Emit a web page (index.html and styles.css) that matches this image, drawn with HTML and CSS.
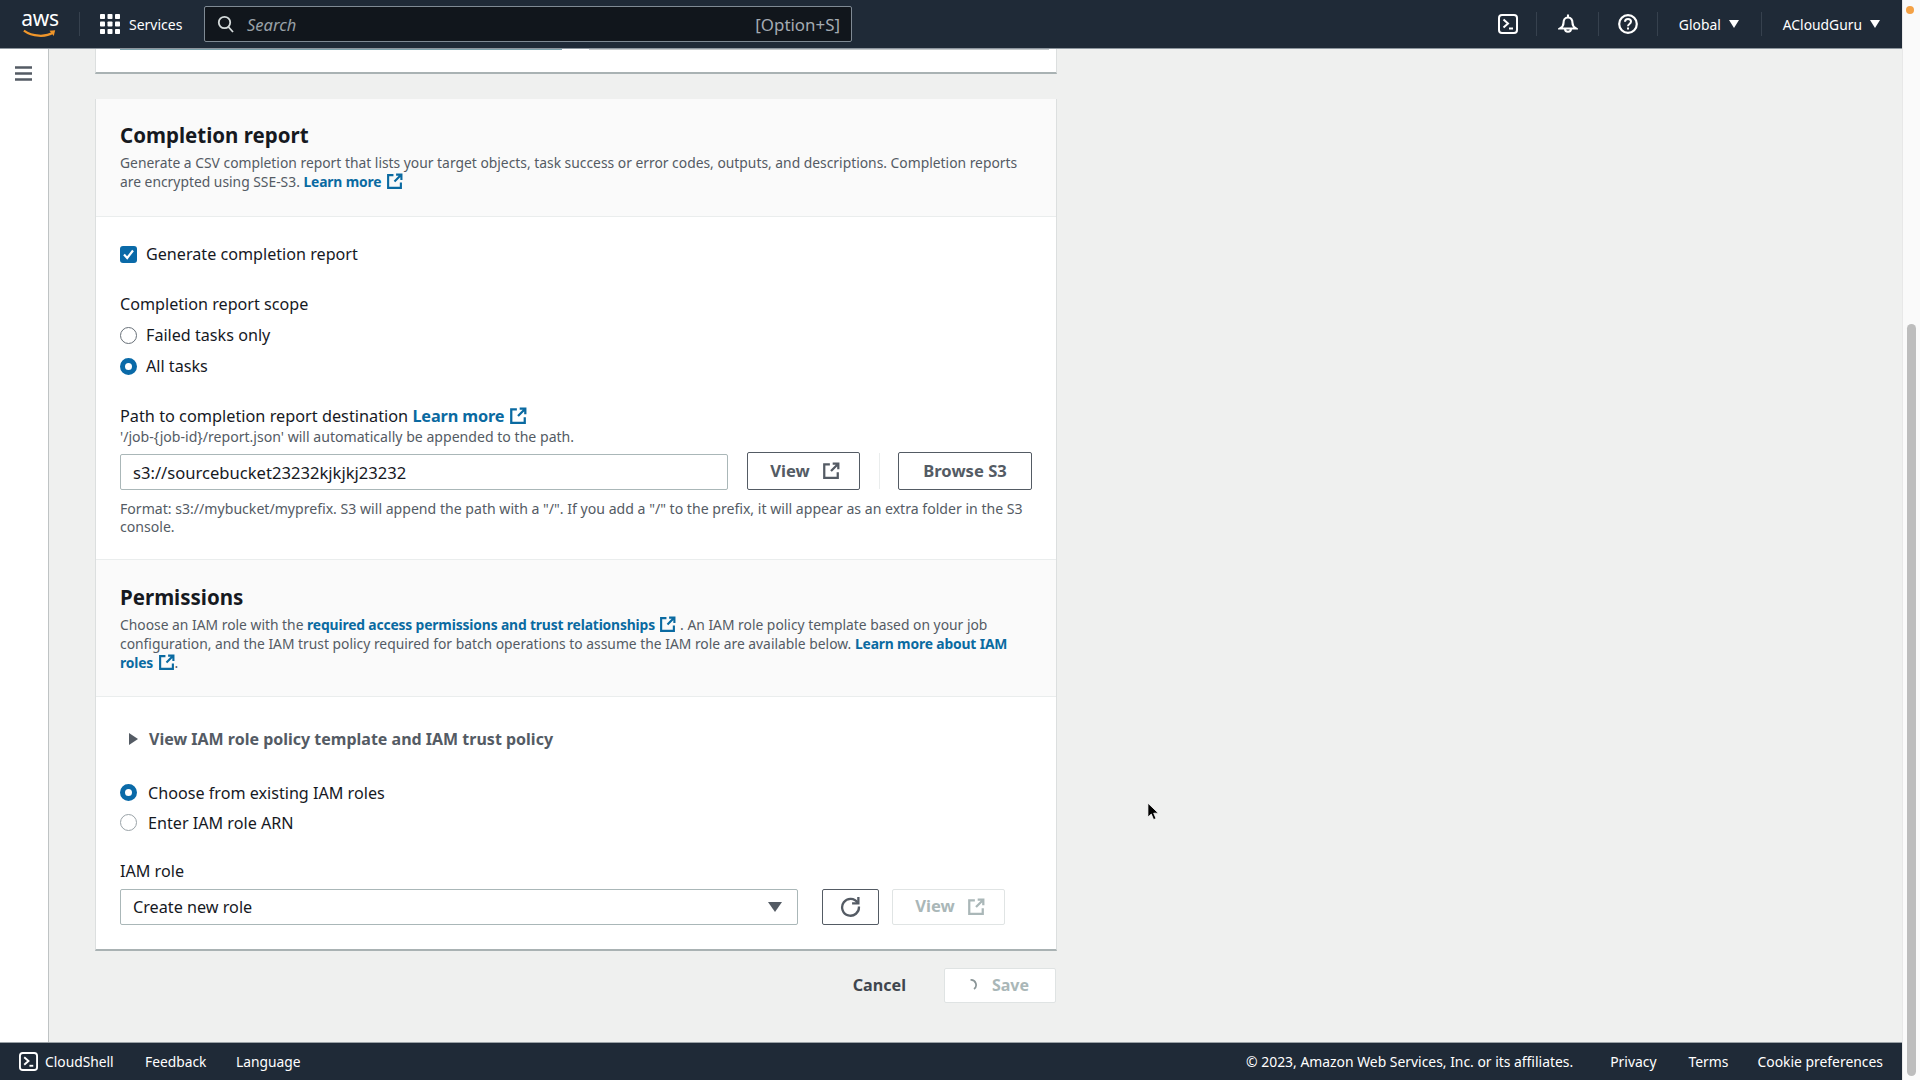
FILE: index.html
```html
<!DOCTYPE html>
<html lang="en">
<head>
<meta charset="utf-8">
<title>Batch Operations - Completion report</title>
<link rel="stylesheet" href="styles.css">
</head>
<body>
<svg class="defs" width="0" height="0" aria-hidden="true">
  <symbol id="ext" viewBox="0 0 16 16"><path d="M7 2H2v12h12V9M9.500 1.500h5v5M14.500 1.500L8 8" fill="none" stroke="currentColor" stroke-width="2"/></symbol>
  <symbol id="shell" viewBox="0 0 20 20"><rect x="1" y="1" width="18" height="18" rx="3" fill="none" stroke="currentColor" stroke-width="2"/><path d="M5.500 5.500L10 9.500 5.500 13.500" fill="none" stroke="currentColor" stroke-width="2"/><path d="M11 14.500h4" stroke="currentColor" stroke-width="2"/></symbol>
</svg>
<div class="shell">
  <div class="app">
    <header class="topbar">
      <div class="logo">
        <span class="logo-text">aws</span>
        <svg class="smile" viewBox="0 0 38 10"><path d="M2 1.500C11 8 25 8.500 33 3.500" fill="none" stroke="#f0962a" stroke-width="2.400"/><path d="M29 1.500l6-.5-1.500 6z" fill="#f0962a"/></svg>
      </div>
      <span class="top-div logo-div"></span>
      <svg class="grid-icon" viewBox="0 0 20 20" fill="#fff"><rect x="0" y="0" width="5" height="5" rx=".8"/><rect x="7.500" y="0" width="5" height="5" rx=".8"/><rect x="15" y="0" width="5" height="5" rx=".8"/><rect x="0" y="7.500" width="5" height="5" rx=".8"/><rect x="7.500" y="7.500" width="5" height="5" rx=".8"/><rect x="15" y="7.500" width="5" height="5" rx=".8"/><rect x="0" y="15" width="5" height="5" rx=".8"/><rect x="7.500" y="15" width="5" height="5" rx=".8"/><rect x="15" y="15" width="5" height="5" rx=".8"/></svg>
      <span class="services">Services</span>
      <div class="search">
        <svg class="search-icon" viewBox="0 0 18 18"><circle cx="7.500" cy="7.500" r="5.700" fill="none" stroke="currentColor" stroke-width="1.800"/><path d="M11.500 12l4.500 5" stroke="currentColor" stroke-width="1.800" fill="none"/></svg>
        <span class="search-text">Search</span>
        <span class="search-key">[Option+S]</span>
      </div>
      <div class="top-right">
        <svg class="top-icon" viewBox="0 0 20 20"><use href="#shell"/></svg>
        <span class="top-div d1"></span>
        <svg class="top-icon bell" viewBox="0 0 20 20"><path d="M10 .5v3M10 3.500c-3.200 0-4.500 2.500-4.500 5.500 0 2.500-1 4-3.500 5.500h16c-2.500-1.500-3.500-3-3.500-5.500 0-3-1.300-5.500-4.500-5.500zM7 14.700a3 3 0 0 0 6 0" fill="none" stroke="#fff" stroke-width="2.100"/></svg>
        <span class="top-div d2"></span>
        <svg class="top-icon help" viewBox="0 0 20 20"><circle cx="10" cy="10" r="8.800" fill="none" stroke="#fff" stroke-width="2.200"/><path d="M7 7.800c0-1.800 1.300-2.800 3-2.800s3 1 3 2.600c0 2.400-3 2.300-3 4.600" fill="none" stroke="#fff" stroke-width="2"/><rect x="9" y="13.500" width="2" height="2" fill="#fff"/></svg>
        <span class="top-div d3"></span>
        <span class="menu-label">Global</span><span class="caret-w"></span>
        <span class="top-div d4"></span>
        <span class="menu-label">ACloudGuru</span><span class="caret-w"></span>
      </div>
    </header>

    <div class="middle">
      <aside class="sidebar">
        <svg class="burger" viewBox="0 0 17 15"><path d="M0 1.500h17M0 7.500h17M0 13.500h17" stroke="#545b64" stroke-width="2.400"/></svg>
      </aside>
      <main class="content">
        <section class="card card-clipped">
          <div class="peek"><span class="peek-a"></span><span class="peek-b"></span></div>
        </section>

        <section class="card">
          <div class="card-head">
            <h2 class="title">Completion report</h2>
            <p class="desc">Generate a CSV completion report that lists your target objects, task success or error codes, outputs, and descriptions. Completion reports are encrypted using SSE-S3. <a class="link">Learn more <svg class="ext"><use href="#ext"/></svg></a></p>
          </div>
          <div class="body body-report">
            <label class="choice"><span class="checkbox"><svg viewBox="0 0 17 17"><path d="M4 8.500l3.200 3.500L13 4.500" fill="none" stroke="#fff" stroke-width="2.200"/></svg></span>Generate completion report</label>
            <div class="field-label scope-label">Completion report scope</div>
            <label class="choice c-failed"><span class="radio"></span>Failed tasks only</label>
            <label class="choice c-all"><span class="radio on"></span>All tasks</label>
            <div class="field-label path-label">Path to completion report destination <a class="link">Learn more <svg class="ext ext-l"><use href="#ext"/></svg></a></div>
            <div class="hint hint-top">'/job-{job-id}/report.json' will automatically be appended to the path.</div>
            <div class="input-row">
              <div class="input path-input">s3://sourcebucket23232kjkjkj23232</div>
              <button class="btn btn-view">View <svg class="ext ext-l"><use href="#ext"/></svg></button>
              <span class="btn-div"></span>
              <button class="btn btn-browse">Browse S3</button>
            </div>
            <div class="hint hint-format">Format: s3://mybucket/myprefix. S3 will append the path with a "/". If you add a "/" to the prefix, it will appear as an extra folder in the S3 console.</div>
          </div>

          <div class="card-head perm-head">
            <h2 class="title">Permissions</h2>
            <p class="desc">Choose an IAM role with the <a class="link">required access permissions and trust relationships <svg class="ext"><use href="#ext"/></svg></a> . An IAM role policy template based on your job configuration, and the IAM trust policy required for batch operations to assume the IAM role are available below. <a class="link">Learn more about IAM roles <svg class="ext"><use href="#ext"/></svg></a>.</p>
          </div>
          <div class="body body-perm">
            <div class="expand"><span class="tri"></span>View IAM role policy template and IAM trust policy</div>
            <label class="choice c-choose wide"><span class="radio on"></span>Choose from existing IAM roles</label>
            <label class="choice c-enter wide"><span class="radio light"></span>Enter IAM role ARN</label>
            <div class="field-label role-label">IAM role</div>
            <div class="input-row role-row">
              <div class="input select">Create new role<span class="caret-d"></span></div>
              <button class="btn btn-refresh" aria-label="Refresh"><svg viewBox="0 0 20 20"><path d="M16.800 6.500A8 8 0 1 0 18 10" fill="none" stroke="#545b64" stroke-width="2.200"/><path d="M17.500 1v6H11.500" fill="none" stroke="#545b64" stroke-width="2.200"/></svg></button>
              <button class="btn btn-off">View <svg class="ext ext-l"><use href="#ext"/></svg></button>
            </div>
          </div>
        </section>

        <div class="actions">
          <span class="cancel">Cancel</span>
          <button class="btn-save"><svg viewBox="0 0 12 12"><path d="M3.500 1a5 5 0 0 1 3.500 9" fill="none" stroke="#8a9597" stroke-width="1.700"/></svg>Save</button>
        </div>
      </main>
    </div>

    <footer class="footer">
      <svg class="foot-icon" viewBox="0 0 20 20"><use href="#shell"/></svg>
      <span class="foot-shell">CloudShell</span>
      <span class="foot-feedback">Feedback</span>
      <span class="foot-lang">Language</span>
      <div class="foot-right">
        <span>© 2023, Amazon Web Services, Inc. or its affiliates.</span>
        <span class="f-privacy">Privacy</span>
        <span class="f-terms">Terms</span>
        <span class="f-cookie">Cookie preferences</span>
      </div>
    </footer>
  </div>
  <div class="scrollbar"><span class="dot"></span><span class="thumb"></span></div>
</div>
<svg class="cursor" viewBox="0 0 14 20"><path d="M1 1v15l3.600-3.300 2.500 6 2.600-1.100-2.500-5.800h5z" fill="#000" stroke="#fff" stroke-width=".8"/></svg>
</body>
</html>
```

FILE: styles.css
```css
* { box-sizing: border-box; }
html, body { margin: 0; height: 100%; overflow: hidden; }
body { font-family: "Noto Sans", "Open Sans", sans-serif; font-size: 16.150px; color: #16191f; background: #fff; }
.defs { position: absolute; }
.shell { display: flex; height: 1080px; width: 1920px; }
.app { width: 1902px; display: flex; flex-direction: column; }

.topbar { height: 49px; background: #1f2a37; border-bottom: 1px solid #8d969e; display: flex; align-items: center; color: #fff; flex: none; }
.logo { width: 36px; margin-left: 22px; display: flex; flex-direction: column; align-items: center; height: 34px; }
.logo-text { font-size: 21px; line-height: 22px; letter-spacing: -.3px; }
.smile { width: 36px; height: 10px; }
.top-div { width: 1px; height: 24px; background: #36414e; flex: none; }
.logo-div { margin-left: 21px; }
.grid-icon { width: 20px; height: 20px; margin-left: 20px; flex: none; }
.services { margin-left: 9px; font-size: 14px; width: 54px; flex: none; }
.search { margin-left: 21px; width: 648px; height: 36px; background: #11161c; border: 1px solid #7f8a94; border-radius: 2px; display: flex; align-items: center; color: #b7bdc3; flex: none; }
.search-icon { width: 18px; height: 18px; margin-left: 12px; color: #d5dbdb; }
.search-text { margin-left: 12px; font-style: italic; color: #99a1a8; font-size: 16.500px; }
.search-key { margin-left: auto; margin-right: 11px; color: #a4abb2; font-size: 16.900px; }
.top-right { margin-left: auto; display: flex; align-items: center; height: 100%; }
.top-icon { width: 20px; height: 20px; color: #fff; flex: none; }
.d1 { margin-left: 18px; }
.bell { margin-left: 21px; }
.d2 { margin-left: 20px; }
.help { margin-left: 19px; }
.d3 { margin-left: 19px; }
.menu-label { font-size: 13.850px; margin-left: 21px; }
.caret-w { width: 0; height: 0; border-left: 5px solid transparent; border-right: 5px solid transparent; border-top: 8px solid #fff; margin-left: 8px; }
.d4 { margin-left: 22px; }
.top-right > .caret-w:last-child { margin-right: 22px; }

.middle { flex: 1; display: flex; min-height: 0; background: #eff0ef; }
.sidebar { width: 49px; background: #fff; border-right: 1px solid #bfc3c4; flex: none; }
.burger { display: block; width: 17px; height: 15px; margin: 17px 0 0 15px; }
.content { padding-left: 46px; width: 1010px; flex: none; overflow: hidden; }

.card { width: 962px; background: #fff; border: 1px solid #dcdfdf; border-top: 0; border-bottom: 2px solid #a9b2b3; display: flex; flex-direction: column; }
.card-clipped { height: 25px; margin-bottom: 25px; }
.peek { display: flex; margin-left: 24px; }
.peek-a { width: 442px; height: 1px; background: #7ea3ad; }
.peek-b { width: 460px; height: 1px; margin-left: 27px; background: #c5c9cb; }

.card-head { background: #fafafa; border-bottom: 1px solid #eaeded; padding: 22px 24px 24px; height: 118px; }
.title { margin: 0; font-size: 20.500px; line-height: 28px; font-weight: 700; color: #16191f; }
.desc { margin: 4px 0 0; font-size: 13.850px; line-height: 19.300px; color: #545b64; }
.link { color: #0a6aa1; font-weight: 700; letter-spacing: -.15px; }
.ext { width: 17px; height: 17px; vertical-align: -3px; margin-left: 1px; }
.ext-l { width: 18px; height: 18px; margin-left: 1px; }

.body { padding: 0 24px; }
.body-report { padding-top: 25px; padding-bottom: 22px; }
.choice { display: flex; align-items: center; height: 24px; color: #16191f; }
.checkbox { width: 17px; height: 17px; background: #0a6aa8; border-radius: 3px; margin-right: 9px; flex: none; }
.checkbox svg { display: block; }
.radio { width: 17px; height: 17px; border-radius: 50%; border: 1.500px solid #687078; margin-right: 9px; flex: none; background: #fff; }
.radio.on { border: 5px solid #0a6aa8; }
.radio.light { border-color: #9aa3a8; }
.wide .radio { margin-right: 11px; }
.field-label { line-height: 22px; height: 22px; color: #16191f; }
.scope-label { margin-top: 27px; }
.c-failed { margin-top: 8px; }
.c-all { margin-top: 7px; }
.path-label { margin-top: 27px; font-size: 16.300px; }
.hint { font-size: 14.100px; color: #545b64; }
.hint-top { margin-top: 0; line-height: 19px; }
.input-row { display: flex; align-items: flex-end; margin-top: 6px; height: 38px; }
.input { height: 36px; border: 1px solid #aab7b8; border-radius: 2px; padding: 0 12px; line-height: 35px; background: #fff; color: #16191f; font-size: 16.600px; }
.path-input { width: 608px; flex: none; }
.btn { height: 38px; background: #fff; border: 1px solid #545b64; border-radius: 2px; font: 700 16.600px "Noto Sans", "Open Sans", sans-serif; color: #545b64; padding: 0 0 2px; display: flex; align-items: center; justify-content: center; flex: none; }
.btn .ext-l { margin-left: 12px; margin-top: 2px; }
.btn-view, .btn-off { padding-left: 3px; }
.btn-view { width: 113px; margin-left: 19px; }
.btn-div { width: 1px; height: 36px; background: #eaeded; margin: 0 18px 1px 19px; flex: none; }
.btn-browse { width: 134px; }
.hint-format { margin-top: 10px; line-height: 18.400px; }

.perm-head { height: 138px; padding-top: 23px; background: #fafafa; border-top: 1px solid #eaeded; }
.body-perm { padding-top: 30px; padding-bottom: 24px; }
.expand { height: 24px; display: flex; align-items: center; font-weight: 700; color: #545b64; font-size: 16px; }
.tri { width: 0; height: 0; border-top: 6px solid transparent; border-bottom: 6px solid transparent; border-left: 9px solid #545b64; margin: 0 11px 0 9px; }
.c-choose { margin-top: 30px; }
.c-enter { margin-top: 6px; }
.role-label { margin-top: 25px; }
.role-row { margin-top: 7px; height: 36px; }
.select { width: 678px; flex: none; display: flex; align-items: center; justify-content: space-between; padding: 1px 15px 0 12px; font-size: 16.200px; }
.caret-d { width: 0; height: 0; border-left: 7px solid transparent; border-right: 7px solid transparent; border-top: 10px solid #545b64; }
.btn-refresh { width: 57px; height: 36px; margin-left: 24px; padding: 0; }
.btn-refresh svg { width: 21px; height: 21px; }
.btn-off { width: 113px; height: 36px; margin-left: 13px; border-color: #e0e4e4; color: #aab7b8; }

.actions { width: 961px; display: flex; justify-content: flex-end; align-items: center; margin-top: 17px; height: 35px; }
.cancel { font-weight: 700; color: #3f464e; margin-right: 38px; }
.btn-save { width: 112px; height: 35px; background: #fff; border: 1px solid #dfe3e3; border-radius: 2px; font: 700 16px "Noto Sans", "Open Sans", sans-serif; color: #aab7b8; display: flex; align-items: center; justify-content: center; padding: 0; }
.btn-save svg { width: 12px; height: 12px; margin-right: 13px; margin-left: -4px; }

.footer { height: 38px; background: #1f2a37; border-top: 1px solid #9aa1a6; color: #fff; font-size: 13.800px; display: flex; align-items: center; flex: none; }
.foot-icon { width: 19px; height: 19px; margin-left: 19px; color: #fff; }
.foot-shell { margin-left: 7px; width: 69px; }
.foot-feedback { margin-left: 31px; width: 61px; }
.foot-lang { margin-left: 30px; }
.foot-right { margin-left: auto; display: flex; margin-right: 19px; font-size: 13.900px; }
.f-privacy { margin-left: 37px; }
.f-terms { margin-left: 32px; }
.f-cookie { margin-left: 29px; }

.scrollbar { width: 18px; background: #fafafa; border-left: 1px solid #e8e8e8; display: flex; flex-direction: column; align-items: center; position: relative; flex: none; }
.dot { position: absolute; top: 6px; left: 3px; width: 8px; height: 8px; border-radius: 50%; background: #f4a145; }
.thumb { width: 9px; height: 752px; margin-top: 324px; background: #bdbdbd; border-radius: 5px; }

.cursor { position: absolute; left: 1147px; top: 802px; width: 13px; height: 19px; }
```
